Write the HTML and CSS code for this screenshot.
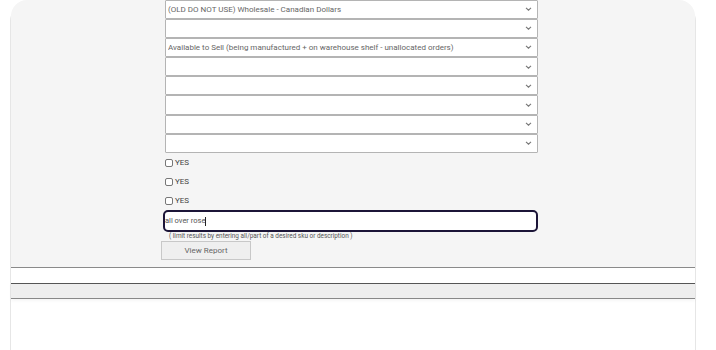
FILE: index.html
```html
<!DOCTYPE html>
<html lang="en">
<head>
    <meta charset="UTF-8">
    <meta name="viewport" content="width=device-width, initial-scale=1.0">
    <title>Inventory Report</title>
    <link rel="stylesheet" href="styles.css">
</head>
<body>
    <div class="card">
        <form class="report-form">
            <select class="field-select">
                <option>(OLD DO NOT USE) Wholesale - Canadian Dollars</option>
            </select>
            <select class="field-select">
                <option></option>
            </select>
            <select class="field-select">
                <option>Available to Sell (being manufactured + on warehouse shelf - unallocated orders)</option>
            </select>
            <select class="field-select"><option></option></select>
            <select class="field-select"><option></option></select>
            <select class="field-select"><option></option></select>
            <select class="field-select"><option></option></select>
            <select class="field-select"><option></option></select>

            <label class="check-row"><input type="checkbox" class="check"> YES</label>
            <label class="check-row"><input type="checkbox" class="check"> YES</label>
            <label class="check-row"><input type="checkbox" class="check"> YES</label>

            <div class="search-box">all over rose<span class="caret"></span></div>
            <div class="hint">( limit results by entering all/part of a desired sku or description )</div>

            <button type="button" class="view-btn">View Report</button>
        </form>

        <div class="results">
            <div class="results-gap"></div>
            <div class="results-head"></div>
            <div class="results-body"></div>
        </div>
    </div>
</body>
</html>
```

FILE: styles.css
```css
body {
    margin: 0;
    background: #fff;
    font-family: Roboto, "Liberation Sans", sans-serif;
    color: #555;
    overflow: hidden;
}
.card {
    margin: 5px 0 0 10px;
    width: 684px;
    height: 400px;
    border: 1px solid #e6e6e6;
    border-bottom: none;
    border-radius: 16px 16px 0 0;
    background: #fff;
}
.report-form {
    background: #f5f5f5;
    border-radius: 16px 16px 0 0;
    padding: 0 0 7px 154px;
}
.field-select {
    display: block;
    width: 373px;
    height: 19.2px;
    margin: 0;
    padding: 0 14px 0 2px;
    border: 1px solid #b4b4b4;
    border-radius: 1px;
    background: #fff url("data:image/svg+xml,%3Csvg xmlns='http://www.w3.org/2000/svg' width='7' height='4' viewBox='0 0 7 4'%3E%3Cpath d='M1 0.8l2.5 2.4 2.5-2.4' fill='none' stroke='%23777' stroke-width='1.1'/%3E%3C/svg%3E") no-repeat right 5px center;
    -webkit-appearance: none;
    appearance: none;
    font-family: inherit;
    font-size: 8px;
    color: #666;
    box-sizing: border-box;
}
.field-select:first-child {
    margin-top: -6.5px;
}
.check-row {
    display: flex;
    align-items: center;
    gap: 2px;
    height: 19px;
    font-size: 8px;
    color: #444;
}
.check {
    -webkit-appearance: none;
    appearance: none;
    width: 8px;
    height: 8px;
    margin: 1px 0 0;
    border: 1px solid #777;
    border-radius: 2px;
    background: #fff;
}
.search-box {
    margin: 0 0 0 -2px;
    width: 375px;
    height: 22px;
    box-sizing: border-box;
    border: 2px solid #1c1538;
    border-radius: 5px;
    background: #fff;
    font-size: 7.5px;
    line-height: 18px;
    padding-left: 0;
    color: #555;
}
.caret {
    display: inline-block;
    width: 1px;
    height: 9px;
    background: #222;
    vertical-align: middle;
}
.hint {
    margin: 0 0 0 4px;
    font-size: 6.4px;
    line-height: 8px;
    color: #555;
}
.view-btn {
    display: block;
    margin: 1px 0 0 -4px;
    width: 90px;
    height: 19px;
    padding: 0;
    border: 1px solid #c8c8c8;
    background: #efefef;
    font-family: inherit;
    font-size: 8px;
    color: #666;
}
.results {
    border-top: 1px solid #8a8a8a;
}
.results-gap {
    height: 15px;
    background: #fff;
}
.results-head {
    height: 14px;
    background: #eee;
    border-top: 1px solid #555;
    border-bottom: 1px solid #888;
    box-shadow: 0 2px 3px rgba(0, 0, 0, 0.04);
}
.results-body {
    height: 60px;
}
```
